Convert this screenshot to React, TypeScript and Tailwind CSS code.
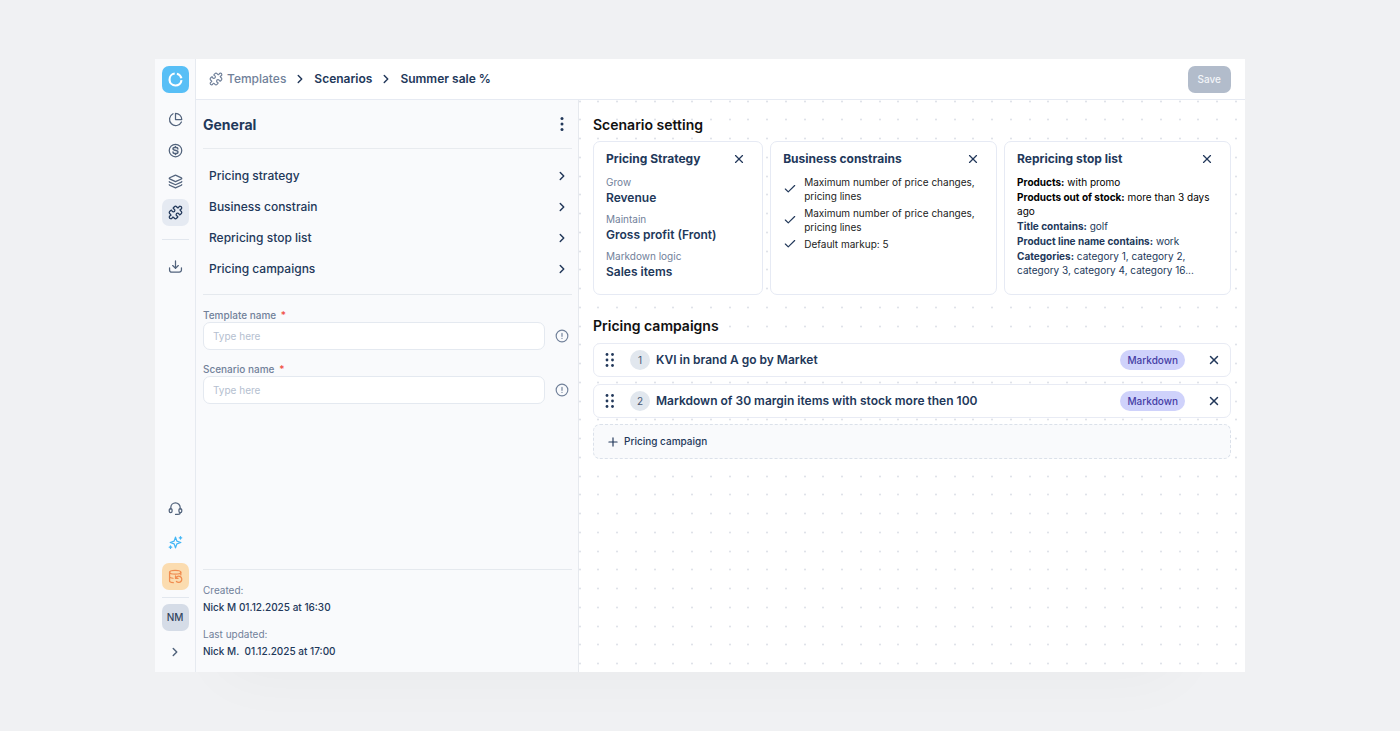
import React, { useState } from 'react';
import { Check, ChevronRight, Layers, Plus, Puzzle, X } from 'lucide-react';

const settings = ['Pricing strategy', 'Business constrain', 'Repricing stop list', 'Pricing campaigns'];

const strategy = [
  { label: 'Grow', value: 'Revenue' },
  { label: 'Maintain', value: 'Gross profit (Front)' },
  { label: 'Markdown logic', value: 'Sales items' },
];

const constrains = [
  'Maximum number of price changes, pricing lines',
  'Maximum number of price changes, pricing lines',
  'Default markup: 5',
];

const stopList = [
  { label: 'Products:', value: 'with promo', color: 'text-black' },
  { label: 'Products out of stock:', value: 'more than 3 days ago', color: 'text-black' },
  { label: 'Title contains:', value: 'golf', color: 'text-[#22385a]' },
  { label: 'Product line name contains:', value: 'work', color: 'text-[#22385a]' },
  { label: 'Categories:', value: 'category 1, category 2, category 3, category 4, category 16...', color: 'text-[#22385a]' },
];

const campaigns = ['KVI in brand A go by Market', 'Markdown of 30 margin items with stock more then 100'];

const Icon: React.FC<{ children: React.ReactNode; className?: string }> = ({ children, className = 'size-[15px]' }) => (
  <svg
    viewBox="0 0 24 24"
    fill="none"
    stroke="currentColor"
    strokeWidth="2"
    strokeLinecap="round"
    strokeLinejoin="round"
    className={`shrink-0 ${className}`}
    aria-hidden="true"
  >
    {children}
  </svg>
);

const NavButton: React.FC<{ label: string; className?: string; children: React.ReactNode }> = ({ label, className = '', children }) => (
  <button aria-label={label} className={`flex size-[27px] items-center justify-center rounded-[7px] ${className}`}>
    {children}
  </button>
);

const Sidebar: React.FC = () => (
  <nav className="flex w-[41px] shrink-0 flex-col items-center border-r border-[#e6eaf0] bg-[#f9fafc] py-[7px] text-[#52637c]">
    <NavButton label="Home" className="bg-[#58bff6] text-white">
      <svg viewBox="0 0 24 24" fill="none" stroke="currentColor" strokeWidth="3" className="size-[17px]" aria-hidden="true">
        <path d="M14 3.8a8.5 8.5 0 0 1 6.3 6.5" />
        <path d="M20.5 13a8.5 8.5 0 1 1-9.6-9.4" />
      </svg>
    </NavButton>

    <div className="mt-[13px] flex flex-col gap-1">
      <NavButton label="Analytics">
        <Icon>
          <path d="M21.500 16A10 10 0 1 1 8 2.800" />
          <path d="M22 12A10 10 0 0 0 12 2v10z" />
        </Icon>
      </NavButton>
      <NavButton label="Prices">
        <Icon>
          <circle cx="12" cy="12" r="10" />
          <path
            strokeWidth="2.4"
            d="M8 14.500c0 1.300 1.100 2.400 2.600 2.400h2.800c1.500 0 2.600-1 2.600-2.400 0-1.200-.8-2-1.900-2.200l-4.200-1c-1.100-.2-1.900-1-1.900-2.100 0-1.300 1.100-2.200 2.600-2.200h2.600c1.500 0 2.600 1 2.600 2.400M12 5.500V7M12 17v1.500"
          />
        </Icon>
      </NavButton>
      <NavButton label="Catalog">
        <Layers className="size-[15px]" />
      </NavButton>
      <NavButton label="Templates" className="bg-[#e5eaf2] text-[#22385a]">
        <Puzzle className="size-[15px]" />
      </NavButton>
    </div>

    <div className="my-[13px] h-px w-[27px] bg-[#e2e7ee]" />
    <NavButton label="Downloads">
      <Icon>
        <path d="M12 3v12M7.500 10.500 12 15l4.500-4.500M2.500 14v3.500a3.500 3.500 0 0 0 3.500 3.500h12a3.500 3.500 0 0 0 3.500-3.500V14" />
      </Icon>
    </NavButton>

    <div className="mt-auto flex flex-col items-center gap-[7px]">
      <NavButton label="Support">
        <Icon>
          <path d="M4.500 13v-2.500a7.500 7.500 0 0 1 15 0V13" />
          <rect x="2" y="12" width="4.500" height="6.500" rx="2.200" />
          <rect x="17.500" y="12" width="4.500" height="6.500" rx="2.200" />
          <path d="M19.500 18.500c0 2-1.500 3-3.500 3h-4" />
        </Icon>
      </NavButton>
      <NavButton label="Assistant" className="text-[#43b6f5]">
        <Icon>
          <path d="M12 3.500 14.200 9.800 20.500 12 14.200 14.200 12 20.500 9.800 14.200 3.500 12 9.800 9.800z" />
          <path d="M20 2.500v4M18 4.500h4M4 17.500v4M2 19.500h4" />
        </Icon>
      </NavButton>
      <NavButton label="Data sync" className="bg-[#fbdcb0] text-[#f08c50]">
        <Icon>
          <ellipse cx="11.500" cy="5" rx="9" ry="3" />
          <path d="M2.500 5v14c0 1.500 2.500 2.500 6 2.800M20.500 5v4.500M2.500 12c0 1.400 2.200 2.400 5.500 2.800" />
          <path d="M12 11v4h4M12.500 14.500a5 5 0 1 1 1 5.500" />
        </Icon>
      </NavButton>
    </div>
    <div className="mt-[7px] mb-[6px] h-px w-[27px] bg-[#e2e7ee]" />
    <NavButton label="Account" className="bg-[#d5dce7] text-[10px] font-medium text-[#33465f]">
      NM
    </NavButton>
    <NavButton label="Expand menu" className="mt-[7px]">
      <ChevronRight className="size-[14px]" strokeWidth={2.5} />
    </NavButton>
  </nav>
);

const Field: React.FC<{ id: string; label: string }> = ({ id, label }) => {
  const [value, setValue] = useState('');

  return (
    <div>
      <label htmlFor={id} className="block text-[10px] leading-[14px] font-medium text-[#71819a]">
        {label} <span className="ml-[2px] text-[#f04a3e]">*</span>
      </label>
      <div className="flex items-center gap-[10px]">
        <input
          id={id}
          value={value}
          onChange={(e) => setValue(e.target.value)}
          placeholder="Type here"
          className="h-7 min-w-0 flex-1 rounded-[7px] border border-[#e4e9f0] bg-white px-[9px] text-[10px] text-[#22385a] outline-none placeholder:text-[#b5c0d0]"
        />
        <button aria-label={`About ${label}`} className="text-[#71819a]">
          <Icon className="size-[14px]">
            <circle cx="12" cy="12" r="10" />
            <path d="M12 7.500v5M12 16.200v.1" />
          </Icon>
        </button>
      </div>
    </div>
  );
};

const GeneralPanel: React.FC = () => (
  <aside className="flex w-[383px] shrink-0 flex-col border-r border-[#e6e9ee] bg-[#f9fafc] pr-[6px] pl-[7px] text-[#22385a]">
    <div className="flex h-[49px] items-center justify-between border-b border-[#e8ebef]">
      <h2 className="text-[14px] font-bold">General</h2>
      <button aria-label="More actions" className="flex w-5 justify-center">
        <svg viewBox="0 0 4 16" fill="currentColor" className="h-4 w-1" aria-hidden="true">
          <circle cx="2" cy="2.500" r="1.500" />
          <circle cx="2" cy="8" r="1.500" />
          <circle cx="2" cy="13.500" r="1.500" />
        </svg>
      </button>
    </div>

    <ul className="border-b border-[#e5e9ee] pt-[11px] pb-[10px]">
      {settings.map((item) => (
        <li key={item}>
          <button className="flex h-[31px] w-full items-center justify-between pr-[3px] pl-[6px] text-[12px] font-medium">
            {item}
            <ChevronRight className="size-[14px]" strokeWidth={2.5} />
          </button>
        </li>
      ))}
    </ul>

    <form className="flex flex-col gap-3 pt-[13px] pr-[3px]">
      <Field id="template-name" label="Template name" />
      <Field id="scenario-name" label="Scenario name" />
    </form>

    <dl className="mt-auto border-t border-[#e5e9ee] pt-3 pb-3 text-[10px] leading-[17px]">
      <dt className="text-[#71819a]">Created:</dt>
      <dd className="font-medium">Nick M 01.12.2025 at 16:30</dd>
      <dt className="mt-[10px] text-[#71819a]">Last updated:</dt>
      <dd className="font-medium">Nick M.&nbsp; 01.12.2025 at 17:00</dd>
    </dl>
  </aside>
);

const Card: React.FC<{ title: string; children: React.ReactNode }> = ({ title, children }) => (
  <section className="rounded-[7px] border border-[#e6eaf4] bg-white px-3 pt-2 pb-[14px]">
    <div className="mb-2 flex items-center justify-between pr-1">
      <h3 className="text-[12px] leading-[17px] font-bold text-[#22385a]">{title}</h3>
      <button aria-label={`Remove ${title}`} className="text-[#22385a]">
        <X className="size-[14px]" />
      </button>
    </div>
    {children}
  </section>
);

const DotGrid: React.FC = () => (
  <svg className="absolute inset-0 size-full" aria-hidden="true">
    <defs>
      <pattern id="dots" width="75" height="75" patternUnits="userSpaceOnUse">
        {[1, 19, 38, 57].map((y) =>
          [1, 19, 38, 57].map((x) => <circle key={`${x}-${y}`} cx={x} cy={y + 0.5} r="1" fill="#dcdfe7" />)
        )}
      </pattern>
    </defs>
    <rect width="100%" height="100%" fill="url(#dots)" />
  </svg>
);

const Workspace: React.FC = () => (
  <main className="relative min-w-0 flex-1 bg-white">
    <DotGrid />
    <div className="relative px-[14px] py-4">
      <h2 className="text-[14px] leading-[18px] font-semibold text-[#111]">Scenario setting</h2>
      <div className="mt-[7px] grid grid-cols-[3fr_4fr_4fr] gap-[7px]">
        <Card title="Pricing Strategy">
          <dl className="flex flex-col gap-[6px]">
            {strategy.map(({ label, value }) => (
              <div key={label}>
                <dt className="text-[10px] leading-[15px] text-[#71819a]">{label}</dt>
                <dd className="text-[12px] leading-4 font-semibold text-[#22385a]">{value}</dd>
              </div>
            ))}
          </dl>
        </Card>
        <Card title="Business constrains">
          <ul className="flex flex-col gap-[3px] text-[10px] leading-[14px] text-[#222]">
            {constrains.map((text, i) => (
              <li key={i} className="flex items-center gap-[7px]">
                <Check className="size-[14px] shrink-0 text-[#22385a]" />
                {text}
              </li>
            ))}
          </ul>
        </Card>
        <Card title="Repricing stop list">
          <ul className="flex flex-col gap-px text-[10px] leading-[14px]">
            {stopList.map(({ label, value, color }) => (
              <li key={label} className={color}>
                <b className="font-bold">{label}</b> {value}
              </li>
            ))}
          </ul>
        </Card>
      </div>

      <h2 className="mt-[22px] text-[14px] leading-[18px] font-semibold text-[#111]">Pricing campaigns</h2>
      <ol className="mt-2 flex flex-col gap-[7px]">
        {campaigns.map((name, i) => (
          <li key={name} className="flex h-[34px] items-center rounded-[7px] border border-[#e8ebf4] bg-white pr-[9px] pl-[11px] text-[#22385a]">
            <button aria-label={`Move ${name}`}>
              <svg viewBox="0 0 10 16" fill="currentColor" className="h-4 w-[10px]" aria-hidden="true">
                {[2.5, 8, 13.5].map((y) => (
                  <g key={y}>
                    <circle cx="2" cy={y} r="1.400" />
                    <circle cx="7.500" cy={y} r="1.400" />
                  </g>
                ))}
              </svg>
            </button>
            <span className="ml-[15px] flex size-5 items-center justify-center rounded-full bg-[#e1e7ee] text-[10px] text-[#475872]">
              {i + 1}
            </span>
            <span className="ml-[6px] text-[12px] font-semibold">{name}</span>
            <span className="ml-auto flex h-5 items-center rounded-full bg-[#cfd2fb] px-[7px] text-[10px] font-medium text-[#453da5]">
              Markdown
            </span>
            <button aria-label={`Remove ${name}`} className="ml-[22px]">
              <X className="size-[14px]" strokeWidth={2.5} />
            </button>
          </li>
        ))}
      </ol>
      <button className="mt-[6px] flex h-[35px] w-full items-center gap-1 rounded-[7px] border border-dashed border-[#dbe1ea] bg-[#f9fafc] px-3 text-[10px] font-medium text-[#22385a]">
        <Plus className="size-[14px]" />
        Pricing campaign
      </button>
    </div>
  </main>
);

const TopBar: React.FC = () => (
  <header className="flex h-[41px] items-center justify-between border-b border-[#e6eaf2] bg-white pr-[14px] pl-[13px]">
    <nav aria-label="Breadcrumb" className="flex items-center gap-[7px] text-[12px] font-semibold text-[#22385a]">
      <a href="#templates" className="flex items-center gap-1 font-medium text-[#71819a]">
        <Puzzle className="size-[14px]" />
        Templates
      </a>
      <ChevronRight className="size-[14px]" strokeWidth={2.5} />
      <a href="#scenarios">Scenarios</a>
      <ChevronRight className="size-[14px]" strokeWidth={2.5} />
      <span>Summer sale %</span>
    </nav>
    <button className="h-[27px] rounded-[7px] bg-[#b2bccb] px-[10px] text-[10px] font-medium text-[#f2f5f9]">Save</button>
  </header>
);

export default function App() {
  return (
    <div className="flex min-h-screen bg-[#f0f1f3] px-[155px] py-[59px] font-['Inter',sans-serif]">
      <div className="flex min-w-0 flex-1 shadow-[0_70px_60px_-70px_rgba(30,40,60,0.04)]">
        <Sidebar />
        <div className="flex min-w-0 flex-1 flex-col">
          <TopBar />
          <div className="flex flex-1">
            <GeneralPanel />
            <Workspace />
          </div>
        </div>
      </div>
    </div>
  );
}
